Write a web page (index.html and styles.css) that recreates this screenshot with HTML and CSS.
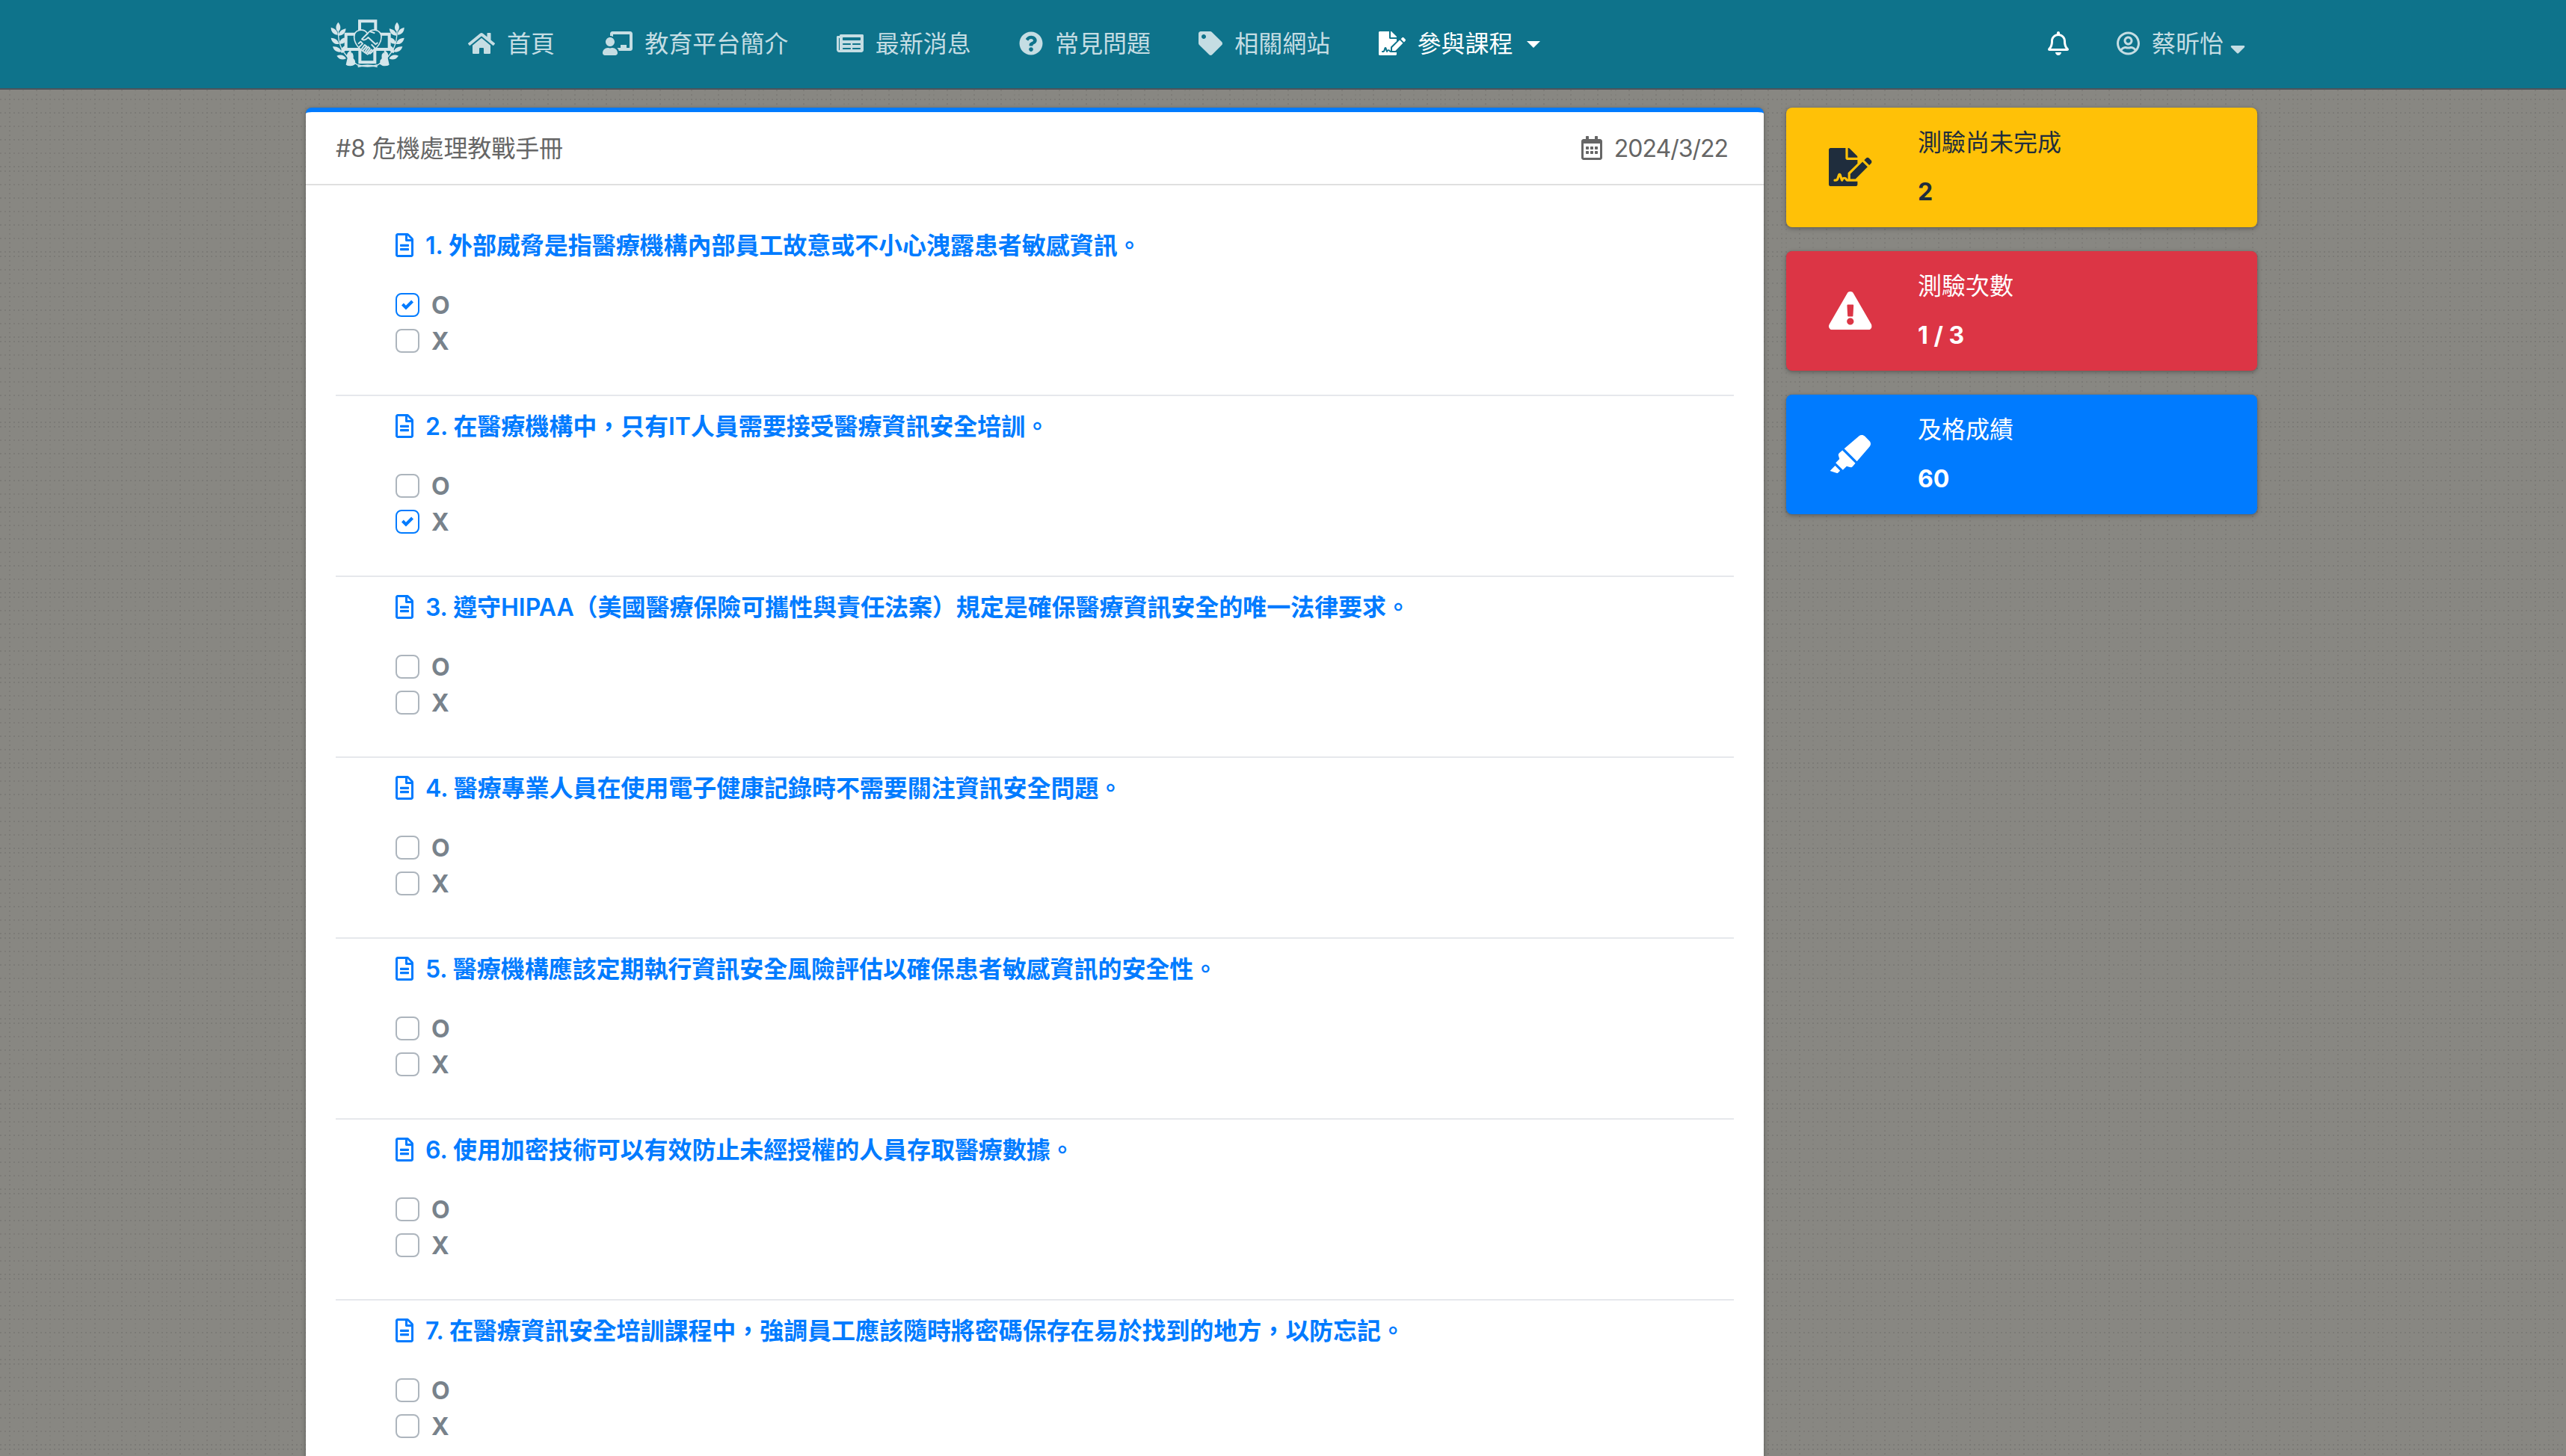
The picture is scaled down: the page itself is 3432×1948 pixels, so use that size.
FILE: index.html
```html
<!DOCTYPE html>
<html lang="zh-Hant">
<head>
<meta charset="utf-8">
<title>危機處理教戰手冊</title>
<link rel="stylesheet" href="styles.css">
</head>
<body>
<svg class="sprite" aria-hidden="true">
  <symbol id="home" viewBox="0 0 576 512"><path d="M280.37 148.26L96 300.11V464a16 16 0 0 0 16 16l112.06-.29a16 16 0 0 0 15.92-16V368a16 16 0 0 1 16-16h64a16 16 0 0 1 16 16v95.64a16 16 0 0 0 16 16.05L464 480a16 16 0 0 0 16-16V300L295.67 148.26a12.19 12.19 0 0 0-15.3 0zM571.6 251.47L488 182.56V44.05a12 12 0 0 0-12-12h-56a12 12 0 0 0-12 12v72.61L318.47 43a48 48 0 0 0-61 0L4.34 251.47a12 12 0 0 0-1.6 16.9l25.5 31A12 12 0 0 0 45.15 301l235.22-193.74a12.19 12.19 0 0 1 15.3 0L530.9 301a12 12 0 0 0 16.9-1.6l25.5-31a12 12 0 0 0-1.7-16.93z"/></symbol>
  <symbol id="teacher" viewBox="0 0 640 512"><path d="M208 352c-2.39 0-4.78.35-7.06 1.09C187.98 357.3 174.35 360 160 360c-14.35 0-27.98-2.7-40.95-6.91-2.28-.74-4.66-1.09-7.05-1.09C49.94 352-.33 402.48 0 464.62.14 490.88 21.73 512 48 512h224c26.27 0 47.86-21.12 48-47.38.33-62.14-49.94-112.62-112-112.62zm-48-32c53.02 0 96-42.98 96-96s-42.98-96-96-96-96 42.98-96 96 42.98 96 96 96zM592 0H208c-26.47 0-48 22.25-48 49.59V96c23.42 0 45.1 6.78 64 17.8V64h352v288h-64v-64H384v64h-76.24c19.1 16.69 33.12 38.73 39.69 64H592c26.47 0 48-22.25 48-49.59V49.59C640 22.25 618.47 0 592 0z"/></symbol>
  <symbol id="news" viewBox="0 0 576 512"><path fill-rule="evenodd" d="M552 64H88c-13.255 0-24 10.745-24 24v8H24c-13.255 0-24 10.745-24 24v272c0 30.928 25.072 56 56 56h472c26.51 0 48-21.49 48-48V88c0-13.255-10.745-24-24-24zM56 400a8 8 0 0 1-8-8V144h16v248a8 8 0 0 1-8 8zm236-16H140c-6.627 0-12-5.373-12-12v-8c0-6.627 5.373-12 12-12h152c6.627 0 12 5.373 12 12v8c0 6.627-5.373 12-12 12zm208 0H348c-6.627 0-12-5.373-12-12v-8c0-6.627 5.373-12 12-12h152c6.627 0 12 5.373 12 12v8c0 6.627-5.373 12-12 12zm-208-96H140c-6.627 0-12-5.373-12-12v-8c0-6.627 5.373-12 12-12h152c6.627 0 12 5.373 12 12v8c0 6.627-5.373 12-12 12zm208 0H348c-6.627 0-12-5.373-12-12v-8c0-6.627 5.373-12 12-12h152c6.627 0 12 5.373 12 12v8c0 6.627-5.373 12-12 12zm0-96H140c-6.627 0-12-5.373-12-12v-40c0-6.627 5.373-12 12-12h360c6.627 0 12 5.373 12 12v40c0 6.627-5.373 12-12 12z"/></symbol>
  <symbol id="question" viewBox="0 0 512 512"><path d="M504 256c0 136.997-111.043 248-248 248S8 392.997 8 256C8 119.083 119.043 8 256 8s248 111.083 248 248zM262.655 90c-54.497 0-89.255 22.957-116.549 63.758-3.536 5.286-2.353 12.415 2.715 16.258l34.699 26.31c5.205 3.947 12.621 3.008 16.665-2.122 17.864-22.658 30.113-35.797 57.303-35.797 20.429 0 45.698 13.148 45.698 32.958 0 14.976-12.363 22.667-32.534 33.976C247.128 238.528 216 254.941 216 296v4c0 6.627 5.373 12 12 12h56c6.627 0 12-5.373 12-12v-1.333c0-28.462 83.186-29.647 83.186-106.667 0-58.002-60.165-102-116.531-102zM256 338c-25.365 0-46 20.635-46 46 0 25.364 20.635 46 46 46s46-20.636 46-46c0-25.365-20.635-46-46-46z"/></symbol>
  <symbol id="tag" viewBox="0 0 512 512"><path d="M0 252.118V48C0 21.49 21.49 0 48 0h204.118a48 48 0 0 1 33.941 14.059l211.882 211.882c18.745 18.745 18.745 49.137 0 67.882L293.823 497.941c-18.745 18.745-49.137 18.745-67.882 0L14.059 286.059A48 48 0 0 1 0 252.118zM112 64c-26.51 0-48 21.49-48 48s21.49 48 48 48 48-21.49 48-48-21.49-48-48-48z"/></symbol>
  <symbol id="signature" viewBox="0 0 576 512"><path d="M218.17 424.14c-2.95-5.92-8.09-6.52-10.17-6.52s-7.22.59-10.02 6.19l-7.67 15.34c-6.37 12.78-25.03 11.37-29.48-2.09L144 386.59l-10.61 31.88c-5.89 17.66-22.38 29.53-41 29.53H80c-8.84 0-16-7.16-16-16s7.16-16 16-16h12.39c4.83 0 9.11-3.08 10.64-7.66l18.19-54.64c3.3-9.81 12.44-16.41 22.78-16.41s19.48 6.59 22.77 16.41l13.88 41.64c19.75-16.19 54.06-9.7 66 14.16 1.89 3.78 5.49 5.95 9.36 6.26v-82.12l128-127.09V160H248c-13.2 0-24-10.8-24-24V0H24C10.7 0 0 10.7 0 24v464c0 13.3 10.7 24 24 24h336c13.3 0 24-10.7 24-24v-40l-128-.11c-16.12-.31-30.58-9.28-37.83-23.75zM384 121.9c0-6.3-2.5-12.4-7-16.9L279.1 7c-4.5-4.5-10.6-7-17-7H256v128h128v-6.1zm-96 225.06V416h68.99l161.68-162.78-67.88-67.88L288 346.96zm280.54-179.63l-31.87-31.87c-9.94-9.94-26.07-9.94-36.01 0l-27.25 27.25 67.88 67.88 27.25-27.25c9.95-9.94 9.95-26.07 0-36.01z"/></symbol>
  <symbol id="bell" viewBox="0 0 448 512"><path d="M439.39 362.29c-19.32-20.76-55.47-51.99-55.47-154.29 0-77.7-54.48-139.9-127.94-155.16V32c0-17.67-14.32-32-31.98-32s-31.98 14.33-31.98 32v20.84C118.56 68.1 64.08 130.3 64.08 208c0 102.3-36.15 133.53-55.47 154.29-6 6.45-8.66 14.16-8.61 21.71.11 16.4 12.98 32 32.1 32h383.8c19.12 0 32-15.6 32.1-32 .05-7.55-2.61-15.27-8.61-21.71zM67.53 368c21.22-27.97 44.42-74.33 44.53-159.42 0-.2-.06-.38-.06-.58 0-61.86 50.14-112 112-112s112 50.14 112 112c0 .2-.06.38-.06.58.11 85.1 23.31 131.46 44.53 159.42H67.53zM224 512c35.32 0 63.97-28.65 63.97-64H160.03c0 35.35 28.65 64 63.97 64z"/></symbol>
  <symbol id="user" viewBox="0 0 496 512"><path d="M248 104c-53 0-96 43-96 96s43 96 96 96 96-43 96-96-43-96-96-96zm0 144c-26.5 0-48-21.5-48-48s21.5-48 48-48 48 21.5 48 48-21.5 48-48 48zm0-240C111 8 0 119 0 256s111 248 248 248 248-111 248-248S385 8 248 8zm0 448c-49.7 0-95.1-18.3-130.1-48.4 14.9-23 40.4-38.6 69.6-39.5 20.8 6.4 40.6 9.6 60.5 9.6s39.7-3.1 60.5-9.6c29.2 1 54.7 16.5 69.6 39.5-35 30.1-80.4 48.4-130.1 48.4zm162.7-84.1c-24.4-31.4-62.1-51.9-105.1-51.9-10.2 0-26 9.6-57.6 9.6-31.5 0-47.4-9.6-57.6-9.6-42.9 0-80.6 20.5-105.1 51.9C61.9 339.2 48 299.2 48 256c0-110.3 89.7-200 200-200s200 89.7 200 200c0 43.2-13.9 83.2-37.3 115.9z"/></symbol>
  <symbol id="caret" viewBox="0 0 320 512"><path d="M31.3 192h257.3c17.8 0 26.7 21.5 14.1 34.1L174.1 354.7c-7.8 7.8-20.5 7.8-28.3 0L17.2 226.1C4.6 213.5 13.5 192 31.3 192z"/></symbol>
  <symbol id="warning" viewBox="0 0 576 512"><path d="M569.517 440.013C587.975 472.007 564.806 512 527.94 512H48.054c-36.937 0-59.999-40.055-41.577-71.987L246.423 23.985c18.467-32.009 64.72-31.951 83.154 0l239.94 416.028zM288 354c-25.405 0-46 20.595-46 46s20.595 46 46 46 46-20.595 46-46-20.595-46-46-46zm-43.673-165.346l7.418 136c.347 6.364 5.609 11.346 11.982 11.346h48.546c6.373 0 11.635-4.982 11.982-11.346l7.418-136c.375-6.874-5.098-12.654-11.982-12.654h-63.383c-6.884 0-12.356 5.78-11.981 12.654z"/></symbol>
  <symbol id="highlighter" viewBox="0 0 544 512"><path d="M0 479.98L99.92 512l35.45-35.45-67.04-67.04L0 479.98zm124.61-240.01a36.592 36.592 0 0 0-10.79 38.1l13.05 42.83-50.93 50.94 96.23 96.23 50.86-50.86 42.74 13.08c13.73 4.2 28.65-.01 38.15-10.78l35.55-41.64-173.34-173.34-41.52 35.44zm403.31-160.7l-63.2-63.2c-20.49-20.49-53.38-21.52-75.12-2.35L190.55 183.68l169.77 169.78L530.27 154.4c19.18-21.74 18.15-54.63-2.35-75.13z"/></symbol>
  <symbol id="calendar" viewBox="0 0 448 512"><path d="M148 288h-40c-6.6 0-12-5.4-12-12v-40c0-6.6 5.4-12 12-12h40c6.6 0 12 5.4 12 12v40c0 6.6-5.4 12-12 12zm108-12v-40c0-6.6-5.4-12-12-12h-40c-6.6 0-12 5.4-12 12v40c0 6.6 5.4 12 12 12h40c6.6 0 12-5.4 12-12zm96 0v-40c0-6.6-5.4-12-12-12h-40c-6.6 0-12 5.4-12 12v40c0 6.6 5.4 12 12 12h40c6.6 0 12-5.4 12-12zm-96 96v-40c0-6.6-5.4-12-12-12h-40c-6.6 0-12 5.4-12 12v40c0 6.6 5.4 12 12 12h40c6.6 0 12-5.4 12-12zm-96 0v-40c0-6.6-5.4-12-12-12h-40c-6.6 0-12 5.4-12 12v40c0 6.6 5.4 12 12 12h40c6.6 0 12-5.4 12-12zm192 0v-40c0-6.6-5.4-12-12-12h-40c-6.6 0-12 5.4-12 12v40c0 6.6 5.4 12 12 12h40c6.6 0 12-5.4 12-12zm96-260v352c0 26.5-21.5 48-48 48H48c-26.5 0-48-21.5-48-48V112c0-26.5 21.5-48 48-48h48V12c0-6.6 5.4-12 12-12h40c6.6 0 12 5.4 12 12v52h128V12c0-6.6 5.4-12 12-12h40c6.6 0 12 5.4 12 12v52h48c26.5 0 48 21.5 48 48zm-48 346V160H48v298c0 3.3 2.7 6 6 6h340c3.3 0 6-2.7 6-6z"/></symbol>
  <symbol id="doc" viewBox="0 0 384 512"><path d="M288 248v28c0 6.6-5.4 12-12 12H108c-6.6 0-12-5.4-12-12v-28c0-6.6 5.4-12 12-12h168c6.6 0 12 5.4 12 12zm-12 72H108c-6.6 0-12 5.4-12 12v28c0 6.6 5.4 12 12 12h168c6.6 0 12-5.4 12-12v-28c0-6.6-5.4-12-12-12zm108-188.1V464c0 26.5-21.5 48-48 48H48c-26.5 0-48-21.5-48-48V48C0 21.5 21.5 0 48 0h204.1C264.8 0 277 5.1 286 14.1L369.9 98c9 8.9 14.1 21.2 14.1 33.9zm-128-80V128h76.1L256 51.9zM336 464V176H232c-13.3 0-24-10.7-24-24V48H48v416h288z"/></symbol>
  <symbol id="check" viewBox="0 0 8 8"><path d="M6.564.75l-3.59 3.612-1.538-1.55L0 4.26l2.974 2.99L8 2.193z"/></symbol>
  <symbol id="laurel" viewBox="0 0 360 300" overflow="visible">
    <path d="M67 90C66 135 74 190 150 234" fill="none" stroke="currentColor" stroke-width="4"/>
    <path d="M67 59C54 74 57 90 67 97C78 90 80 74 67 59zM38 80C38 99 49 109 65 110C65 95 56 85 38 80zM98 85C80 88 69 98 68 113C86 113 96 103 98 85zM38 122C41 140 54 149 70 147C69 133 57 122 38 122zM103 121C84 120 73 130 71 146C87 149 100 139 103 121zM45 157C50 174 64 182 80 178C77 164 63 155 45 157zM97 153C82 157 76 168 80 183C95 181 101 168 97 153zM61 194C70 208 84 213 99 205C92 192 77 186 61 194zM117 172C103 180 98 191 105 205C119 199 123 186 117 172zM100 231C113 238 131 236 137 222C122 213 105 217 100 231zM126 203C117 211 116 221 124 231C137 226 140 213 126 203z" fill="currentColor"/>
    <path d="M124 224Q134 190 122 181L104 203Q99 224 98 230Q120 240 138 226" fill="currentColor"/>
  </symbol>
</svg>

<nav class="navbar">
  <div class="navbar-inner">
    <a class="brand">
      <svg viewBox="0 0 360 300">
        <use href="#laurel" width="360" height="300"/>
        <use href="#laurel" width="360" height="300" transform="translate(370 0) scale(-1 1)"/>
        <g fill="none" stroke="currentColor">
          <path d="M153 107V55H217V107H272V168H214V220H154V168H98V107z" stroke-width="12"/>
          <path d="M146 238Q185 226 224 238M146 230Q185 244 224 230" stroke-width="5"/>
          <path class="heart" d="M185 188C150 168 132 145 131 120C130 88 169 81 185 105C201 81 240 88 240 120C239 145 220 168 185 188z" stroke-width="5"/>
          <path d="M184 105L162 127C169 134 180 129 187 120L217 148L226 141M194 96L214 103M147 146L157 137L165 145L150 160M160 168L173 150L181 156L165 174M173 180L187 158L194 164L178 185M186 185L200 169L205 176L193 187M200 148L215 164L207 172" stroke-width="6" stroke-linejoin="round"/>
        </g>
      </svg>
    </a>
    <div class="menu">
      <a class="link"><svg class="w36"><use href="#home"/></svg>首頁</a>
      <a class="link"><svg class="w40"><use href="#teacher"/></svg>教育平台簡介</a>
      <a class="link"><svg class="w36"><use href="#news"/></svg>最新消息</a>
      <a class="link"><svg class="w32"><use href="#question"/></svg>常見問題</a>
      <a class="link"><svg class="w32"><use href="#tag"/></svg>相關網站</a>
      <a class="link active"><svg class="w36"><use href="#signature"/></svg>參與課程<span class="toggle"></span></a>
    </div>
    <div class="account">
      <a class="link active"><svg class="w28"><use href="#bell"/></svg></a>
      <a class="link"><svg class="w31"><use href="#user"/></svg>蔡昕怡<svg class="caret"><use href="#caret"/></svg></a>
    </div>
  </div>
</nav>

<div class="page">
  <main class="card">
    <header class="card-header">
      <span>#8 危機處理教戰手冊</span>
      <span class="date"><svg class="w28"><use href="#calendar"/></svg>2024/3/22</span>
    </header>
    <div class="card-body">
      <section class="item">
        <h2 class="question"><svg class="w24"><use href="#doc"/></svg>1. 外部威脅是指醫療機構內部員工故意或不小心洩露患者敏感資訊。</h2>
        <div class="option"><span class="box checked"><svg><use href="#check"/></svg></span>O</div>
        <div class="option"><span class="box"></span>X</div>
      </section>
      <section class="item">
        <h2 class="question"><svg class="w24"><use href="#doc"/></svg>2. 在醫療機構中，只有IT人員需要接受醫療資訊安全培訓。</h2>
        <div class="option"><span class="box"></span>O</div>
        <div class="option"><span class="box checked"><svg><use href="#check"/></svg></span>X</div>
      </section>
      <section class="item">
        <h2 class="question"><svg class="w24"><use href="#doc"/></svg>3. 遵守HIPAA（美國醫療保險可攜性與責任法案）規定是確保醫療資訊安全的唯一法律要求。</h2>
        <div class="option"><span class="box"></span>O</div>
        <div class="option"><span class="box"></span>X</div>
      </section>
      <section class="item">
        <h2 class="question"><svg class="w24"><use href="#doc"/></svg>4. 醫療專業人員在使用電子健康記錄時不需要關注資訊安全問題。</h2>
        <div class="option"><span class="box"></span>O</div>
        <div class="option"><span class="box"></span>X</div>
      </section>
      <section class="item">
        <h2 class="question"><svg class="w24"><use href="#doc"/></svg>5. 醫療機構應該定期執行資訊安全風險評估以確保患者敏感資訊的安全性。</h2>
        <div class="option"><span class="box"></span>O</div>
        <div class="option"><span class="box"></span>X</div>
      </section>
      <section class="item">
        <h2 class="question"><svg class="w24"><use href="#doc"/></svg>6. 使用加密技術可以有效防止未經授權的人員存取醫療數據。</h2>
        <div class="option"><span class="box"></span>O</div>
        <div class="option"><span class="box"></span>X</div>
      </section>
      <section class="item">
        <h2 class="question"><svg class="w24"><use href="#doc"/></svg>7. 在醫療資訊安全培訓課程中，強調員工應該隨時將密碼保存在易於找到的地方，以防忘記。</h2>
        <div class="option"><span class="box"></span>O</div>
        <div class="option"><span class="box"></span>X</div>
      </section>
    </div>
  </main>
  <aside class="side">
    <div class="info yellow">
      <div class="info-icon"><svg class="big"><use href="#signature"/></svg></div>
      <div class="info-text"><span>測驗尚未完成</span><b>2</b></div>
    </div>
    <div class="info red">
      <div class="info-icon"><svg class="big"><use href="#warning"/></svg></div>
      <div class="info-text"><span>測驗次數</span><b>1 / 3</b></div>
    </div>
    <div class="info blue">
      <div class="info-icon"><svg class="big"><use href="#highlighter"/></svg></div>
      <div class="info-text"><span>及格成績</span><b>60</b></div>
    </div>
  </aside>
</div>
</body>
</html>
```
FILE: styles.css
```css
* { box-sizing: border-box; }

body {
  margin: 0;
  height: 1948px;
  overflow: hidden;
  font: 32px/46px Inter, "Noto Sans CJK TC", sans-serif;
  background-color: #888782;
  /* woven dot texture, one 114px tile */
  background-image: url("data:image/svg+xml,%3Csvg xmlns='http://www.w3.org/2000/svg' width='114' height='114'%3E%3Cg fill='none' stroke='%23797874' stroke-width='2' stroke-dasharray='2 4'%3E%3Cpath d='M0 1H114M0 37H114M0 73H114M0 109H114' stroke-opacity='.8'/%3E%3Cpath d='M0 19H114M0 55H114M0 91H114' stroke-opacity='.7'/%3E%3Cpath d='M13 0V114M49 0V114M85 0V114' stroke-opacity='.7'/%3E%3Cpath d='M31 0V114M67 0V114M103 0V114M109 0V114' stroke-opacity='.4'/%3E%3C/g%3E%3C/svg%3E");
}

svg { fill: currentColor; display: block; flex: none; height: 32px; }
.sprite { position: absolute; width: 0; height: 0; }
.w24 { width: 24px; }
.w28 { width: 28px; }
.w31 { width: 31px; }
.w32 { width: 32px; }
.w36 { width: 36px; }
.w40 { width: 40px; }

.navbar {
  height: 120px;
  background: #0e738b;
  border-bottom: 2px solid #4b545c;
}
.navbar-inner {
  width: 2614px;
  height: 116px;
  margin: 0 auto;
  padding: 0 20px 0 21px;
  display: flex;
  align-items: center;
}
.brand { color: #d4e6eb; margin-right: 76px; }
.brand svg { width: 120px; height: 100px; margin-top: 4px; }
.heart { fill: #0e738b; }
.menu { display: flex; gap: 64.3px; }
.account { display: flex; gap: 64px; margin-left: auto; }

/* text sits one pixel below the icon's centre line */
.link, .date, .question, .option {
  display: flex;
  align-items: center;
  gap: 16px;
  height: 48px;
  padding-top: 2px;
  white-space: nowrap;
}
.link > svg, .date > svg, .question > svg, .option > .box { margin-top: -2px; }
.link { color: #c5dde3; }
.link.active { color: #fff; }
.toggle {
  margin-left: 2px;
  border: 9.6px solid transparent;
  border-top-color: currentColor;
  border-bottom: 0;
}
.link > .caret { width: 20px; margin: 11px 0 0 -7px; }

.page {
  width: 2614px;
  margin: 24px auto 0;
  padding: 0 4px 0 0;
  display: flex;
  align-items: flex-start;
  gap: 30px;
}
.card {
  width: 1950px;
  background: #fff;
  border-top: 6px solid #007bff;
  border-radius: 8px;
  box-shadow: 0 0 2px rgba(0, 0, 0, .125), 0 2px 6px rgba(0, 0, 0, .3);
}
.card-header {
  display: flex;
  justify-content: space-between;
  padding: 24px 48px 24px 40px;
  border-bottom: 2px solid #dfdfdf;
  color: #666;
}
.card-header > span:first-child { padding-top: 2px; letter-spacing: -.1px; }
.date { letter-spacing: -1px; }
.card-body { padding: 40px; }
.item {
  padding: 16px 80px 48px;
  border-bottom: 2px solid #e6e8ec;
}
.question {
  margin: 0 0 32px;
  font-size: 32px;
  font-weight: 600;
  color: #007bff;
  letter-spacing: -.05px;
}
.option {
  font-weight: 700;
  color: #78828b;
}
.box {
  width: 32px;
  height: 32px;
  display: grid;
  place-items: center;
  border: 2px solid #adb5bd;
  border-radius: 8px;
}
.box.checked { border-color: #007bff; color: #007bff; }
.box svg { width: 16px; height: 16px; }

.side { width: 630px; display: grid; gap: 32px; }
.info {
  height: 160px;
  padding: 16px;
  display: flex;
  align-items: center;
  border-radius: 8px;
  box-shadow: 0 0 2px rgba(0, 0, 0, .125), 0 2px 6px rgba(0, 0, 0, .3);
  color: #fff;
}
.yellow { background: #ffc107; color: #1f2d3d; }
.red { background: #dc3545; }
.blue { background: #007bff; }
.info-icon { width: 140px; display: grid; place-items: center; }
.big { width: 57.6px; height: 51.2px; }
.info-text { display: flex; flex-direction: column; gap: 20px; padding-left: 20px; }
.info-text b { font-weight: 700; }
```
